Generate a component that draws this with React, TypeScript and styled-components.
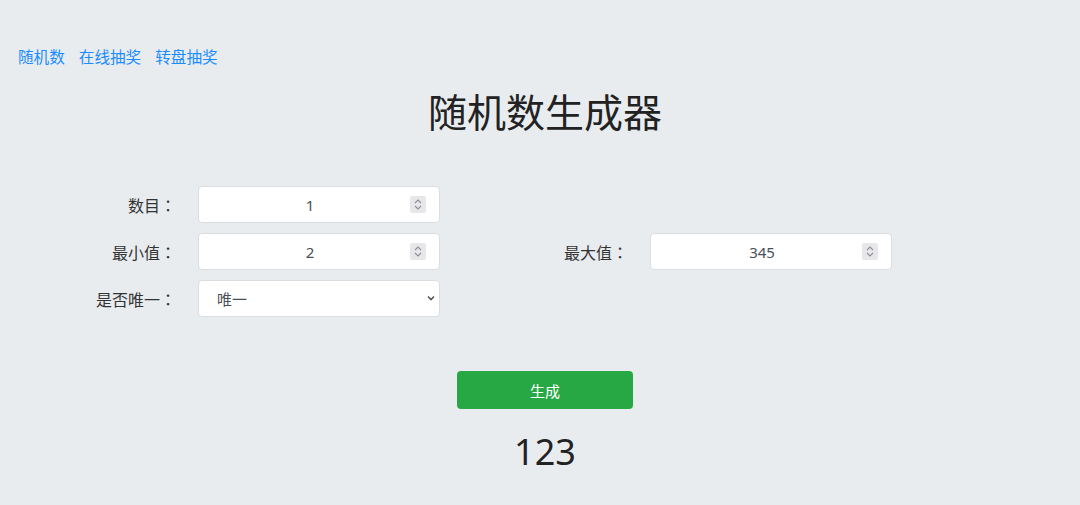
import React from "react";
import styled, { createGlobalStyle } from "styled-components";

const Global = createGlobalStyle`
  html, body { margin: 0; padding: 0; background: #e9ecef; }
  body {
    font-family: "Noto Sans", "Noto Sans CJK SC", sans-serif;
    color: #212529;
  }
  * { box-sizing: border-box; }
`;

const Page = styled.div`
  padding: 46px 8px 0 18px;
  min-height: 505px;
`;

const Nav = styled.nav`
  display: flex;
  gap: 14px;
  height: 20px;
  align-items: center;
`;

const NavLink = styled.a`
  color: #1a8cff;
  font-size: 15.6px;
  text-decoration: none;
  font-family: "Noto Sans CJK SC", sans-serif;
`;

const Title = styled.h1`
  margin: 14px 0 0;
  text-align: center;
  font-size: 39px;
  font-weight: 400;
  line-height: 60px;
  font-family: "Noto Sans CJK SC", sans-serif;
  color: #222;
`;

const Form = styled.div`
  margin-top: 46px;
  display: grid;
  grid-template-columns: 452px 452px;
  row-gap: 10px;
`;

const Field = styled.div<{ $col?: number }>`
  display: flex;
  align-items: center;
  grid-column: ${(p) => p.$col ?? 1};
`;

const Label = styled.label`
  width: 158px;
  text-align: right;
  margin-right: 22px;
  font-size: 16px;
  font-family: "Noto Sans CJK SC", sans-serif;
  color: #333;
`;

const Colon = styled.span`
  font-family: "Noto Sans CJK JP", sans-serif;
`;

const InputWrap = styled.div`
  position: relative;
  width: 242px;
  height: 37px;
`;

const NumberInput = styled.input`
  width: 100%;
  height: 100%;
  border: 1px solid #dadde1;
  border-radius: 4px;
  background: #fff;
  text-align: center;
  font-size: 15px;
  font-family: "Noto Sans", sans-serif;
  color: #495057;
  padding: 0 30px 0 12px;
  outline: none;
  -moz-appearance: textfield;
  &::-webkit-inner-spin-button,
  &::-webkit-outer-spin-button {
    -webkit-appearance: none;
    margin: 0;
  }
`;

const Spinner = styled.span`
  position: absolute;
  right: 14px;
  top: 10px;
  width: 16px;
  height: 17px;
  background: #e7e7ea;
  border-radius: 2px;
  display: flex;
  align-items: center;
  justify-content: center;
`;

const Select = styled.select`
  width: 100%;
  height: 100%;
  border: 1px solid #dadde1;
  border-radius: 4px;
  background: #fff;
  font-size: 15px;
  font-family: "Noto Sans CJK SC", sans-serif;
  color: #495057;
  padding: 0 0 0 18px;
  appearance: none;
  -webkit-appearance: none;
  outline: none;
`;

const Chevron = styled.span`
  position: absolute;
  right: 4px;
  top: 14px;
  display: flex;
  pointer-events: none;
`;

const Actions = styled.div`
  display: flex;
  flex-direction: column;
  align-items: center;
  margin-top: 54px;
`;

const Button = styled.button`
  width: 176px;
  height: 38px;
  background: #28a745;
  color: #fff;
  border: none;
  border-radius: 4px;
  font-size: 15px;
  font-family: "Noto Sans CJK SC", sans-serif;
`;

const Result = styled.div`
  margin-top: 18px;
  font-size: 36px;
  line-height: 50px;
  font-family: "Noto Sans", sans-serif;
  color: #222;
`;

const SpinIcon = () => (
  <svg width="10" height="13" viewBox="0 0 10 13" fill="none" stroke="#8a8f96" strokeWidth="1.1">
    <path d="M2 5 L5 2 L8 5" />
    <path d="M2 8 L5 11 L8 8" />
  </svg>
);

const NumField = ({ value }: { value: string }) => (
  <InputWrap>
    <NumberInput type="number" defaultValue={value} />
    <Spinner>
      <SpinIcon />
    </Spinner>
  </InputWrap>
);

const FieldLabel = ({ text }: { text: string }) => (
  <Label>
    {text}
    <Colon>：</Colon>
  </Label>
);

export default function App() {
  return (
    <>
      <Global />
      <Page>
        <Nav>
          <NavLink href="#">随机数</NavLink>
          <NavLink href="#">在线抽奖</NavLink>
          <NavLink href="#">转盘抽奖</NavLink>
        </Nav>
        <Title>随机数生成器</Title>
        <Form>
          <Field>
            <FieldLabel text="数目" />
            <NumField value="1" />
          </Field>
          <Field $col={1}>
            <FieldLabel text="最小值" />
            <NumField value="2" />
          </Field>
          <Field $col={2}>
            <FieldLabel text="最大值" />
            <NumField value="345" />
          </Field>
          <Field $col={1}>
            <FieldLabel text="是否唯一" />
            <InputWrap>
              <Select defaultValue="1">
                <option value="1">唯一</option>
                <option value="0">不唯一</option>
              </Select>
              <Chevron>
                <svg width="10" height="8" viewBox="0 0 10 8" fill="none" stroke="#555" strokeWidth="1.6">
                  <path d="M2 2.5 L5 5.5 L8 2.5" />
                </svg>
              </Chevron>
            </InputWrap>
          </Field>
        </Form>
        <Actions>
          <Button>生成</Button>
          <Result>123</Result>
        </Actions>
      </Page>
    </>
  );
}
